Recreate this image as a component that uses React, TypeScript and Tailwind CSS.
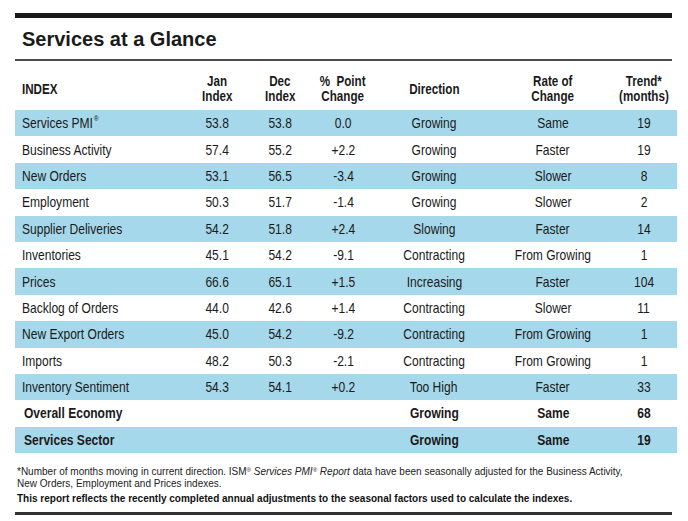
type Row = {
  name: string;
  reg?: boolean;
  jan: string;
  dec: string;
  chg: string;
  dir: string;
  rate: string;
  trend: string;
  bold?: boolean;
};

const rows: Row[] = [
  { name: "Services PMI", reg: true, jan: "53.8", dec: "53.8", chg: "0.0", dir: "Growing", rate: "Same", trend: "19" },
  { name: "Business Activity", jan: "57.4", dec: "55.2", chg: "+2.2", dir: "Growing", rate: "Faster", trend: "19" },
  { name: "New Orders", jan: "53.1", dec: "56.5", chg: "-3.4", dir: "Growing", rate: "Slower", trend: "8" },
  { name: "Employment", jan: "50.3", dec: "51.7", chg: "-1.4", dir: "Growing", rate: "Slower", trend: "2" },
  { name: "Supplier Deliveries", jan: "54.2", dec: "51.8", chg: "+2.4", dir: "Slowing", rate: "Faster", trend: "14" },
  { name: "Inventories", jan: "45.1", dec: "54.2", chg: "-9.1", dir: "Contracting", rate: "From Growing", trend: "1" },
  { name: "Prices", jan: "66.6", dec: "65.1", chg: "+1.5", dir: "Increasing", rate: "Faster", trend: "104" },
  { name: "Backlog of Orders", jan: "44.0", dec: "42.6", chg: "+1.4", dir: "Contracting", rate: "Slower", trend: "11" },
  { name: "New Export Orders", jan: "45.0", dec: "54.2", chg: "-9.2", dir: "Contracting", rate: "From Growing", trend: "1" },
  { name: "Imports", jan: "48.2", dec: "50.3", chg: "-2.1", dir: "Contracting", rate: "From Growing", trend: "1" },
  { name: "Inventory Sentiment", jan: "54.3", dec: "54.1", chg: "+0.2", dir: "Too High", rate: "Faster", trend: "33" },
  { name: "Overall Economy", jan: "", dec: "", chg: "", dir: "Growing", rate: "Same", trend: "68", bold: true },
  { name: "Services Sector", jan: "", dec: "", chg: "", dir: "Growing", rate: "Same", trend: "19", bold: true },
];

const cols = "grid grid-cols-[170px_64px_62px_64px_118px_120px_62px_2px]";

// condensed look: Arial-metric face squeezed horizontally
function C({ children, left }: { children: React.ReactNode; left?: boolean }) {
  return (
    <span className={`inline-block whitespace-nowrap scale-x-[0.83] ${left ? "origin-left" : "origin-center"}`}>
      {children}
    </span>
  );
}

export default function App() {
  return (
    <div className="w-[688px] h-[521px] bg-white text-[#1a1a1a] pt-[13px] overflow-hidden font-['Liberation_Sans',Arial,sans-serif]">
      <div className="ml-[15px] w-[657px]">
        <div className="h-[5px] bg-[#1a1a1a]" />
        <h1 className="mt-[9px] pl-[7px] text-[20px] leading-[24px] font-bold">Services at a Glance</h1>
        <div className="mt-[8px] h-[2px] bg-[#4a4a4a]" />
      </div>

      <div className="ml-[15px] w-[662px]">
        <div className={`${cols} mt-[13px] h-[30px] text-[14px] leading-[15px] font-bold text-center items-center`}>
          <div className="text-left pl-[7px]">
            <C left>INDEX</C>
          </div>
          <div>
            <C>Jan</C>
            <br />
            <C>Index</C>
          </div>
          <div>
            <C>Dec</C>
            <br />
            <C>Index</C>
          </div>
          <div>
            <C>%&nbsp;&nbsp;Point</C>
            <br />
            <C>Change</C>
          </div>
          <div>
            <C>Direction</C>
          </div>
          <div>
            <C>Rate of</C>
            <br />
            <C>Change</C>
          </div>
          <div>
            <C>Trend*</C>
            <br />
            <C>(months)</C>
          </div>
          <div />
        </div>

        <div className="mt-[6px]">
          {rows.map((r, i) => (
            <div
              key={r.name}
              className={`${cols} h-[26.4px] items-center text-center text-[14.5px] leading-[16px] ${
                i % 2 === 0 ? "bg-[#a5d8ea]" : "bg-white"
              } ${r.bold ? "font-bold" : ""}`}
            >
              <div className={`text-left ${r.bold ? "pl-[9px]" : "pl-[7px]"}`}>
                <C left>
                  {r.name}
                  {r.reg && <sup className="text-[8px] -top-[0.85em] ml-[1px]">®</sup>}
                </C>
              </div>
              <div>
                <C>{r.jan}</C>
              </div>
              <div>
                <C>{r.dec}</C>
              </div>
              <div>
                <C>{r.chg}</C>
              </div>
              <div>
                <C>{r.dir}</C>
              </div>
              <div>
                <C>{r.rate}</C>
              </div>
              <div>
                <C>{r.trend}</C>
              </div>
              <div />
            </div>
          ))}
        </div>
      </div>

      <div className="ml-[15px] w-[657px]">
        <div className="mt-[13px] pl-[2px] text-[10px] leading-[12px] text-[#222] whitespace-nowrap">
          <p>
            *Number of months moving in current direction. ISM<sup className="text-[6px]">®</sup>{" "}
            <i>
              Services PMI<sup className="text-[6px]">®</sup> Report
            </i>{" "}
            data have been seasonally adjusted for the Business Activity,
          </p>
          <p>New Orders, Employment and Prices indexes.</p>
          <p className="mt-[3px] font-bold text-[#111]">
            This report reflects the recently completed annual adjustments to the seasonal factors used to calculate the
            indexes.
          </p>
        </div>
        <div className="mt-[7px] h-[3px] bg-[#333]" />
      </div>
    </div>
  );
}
